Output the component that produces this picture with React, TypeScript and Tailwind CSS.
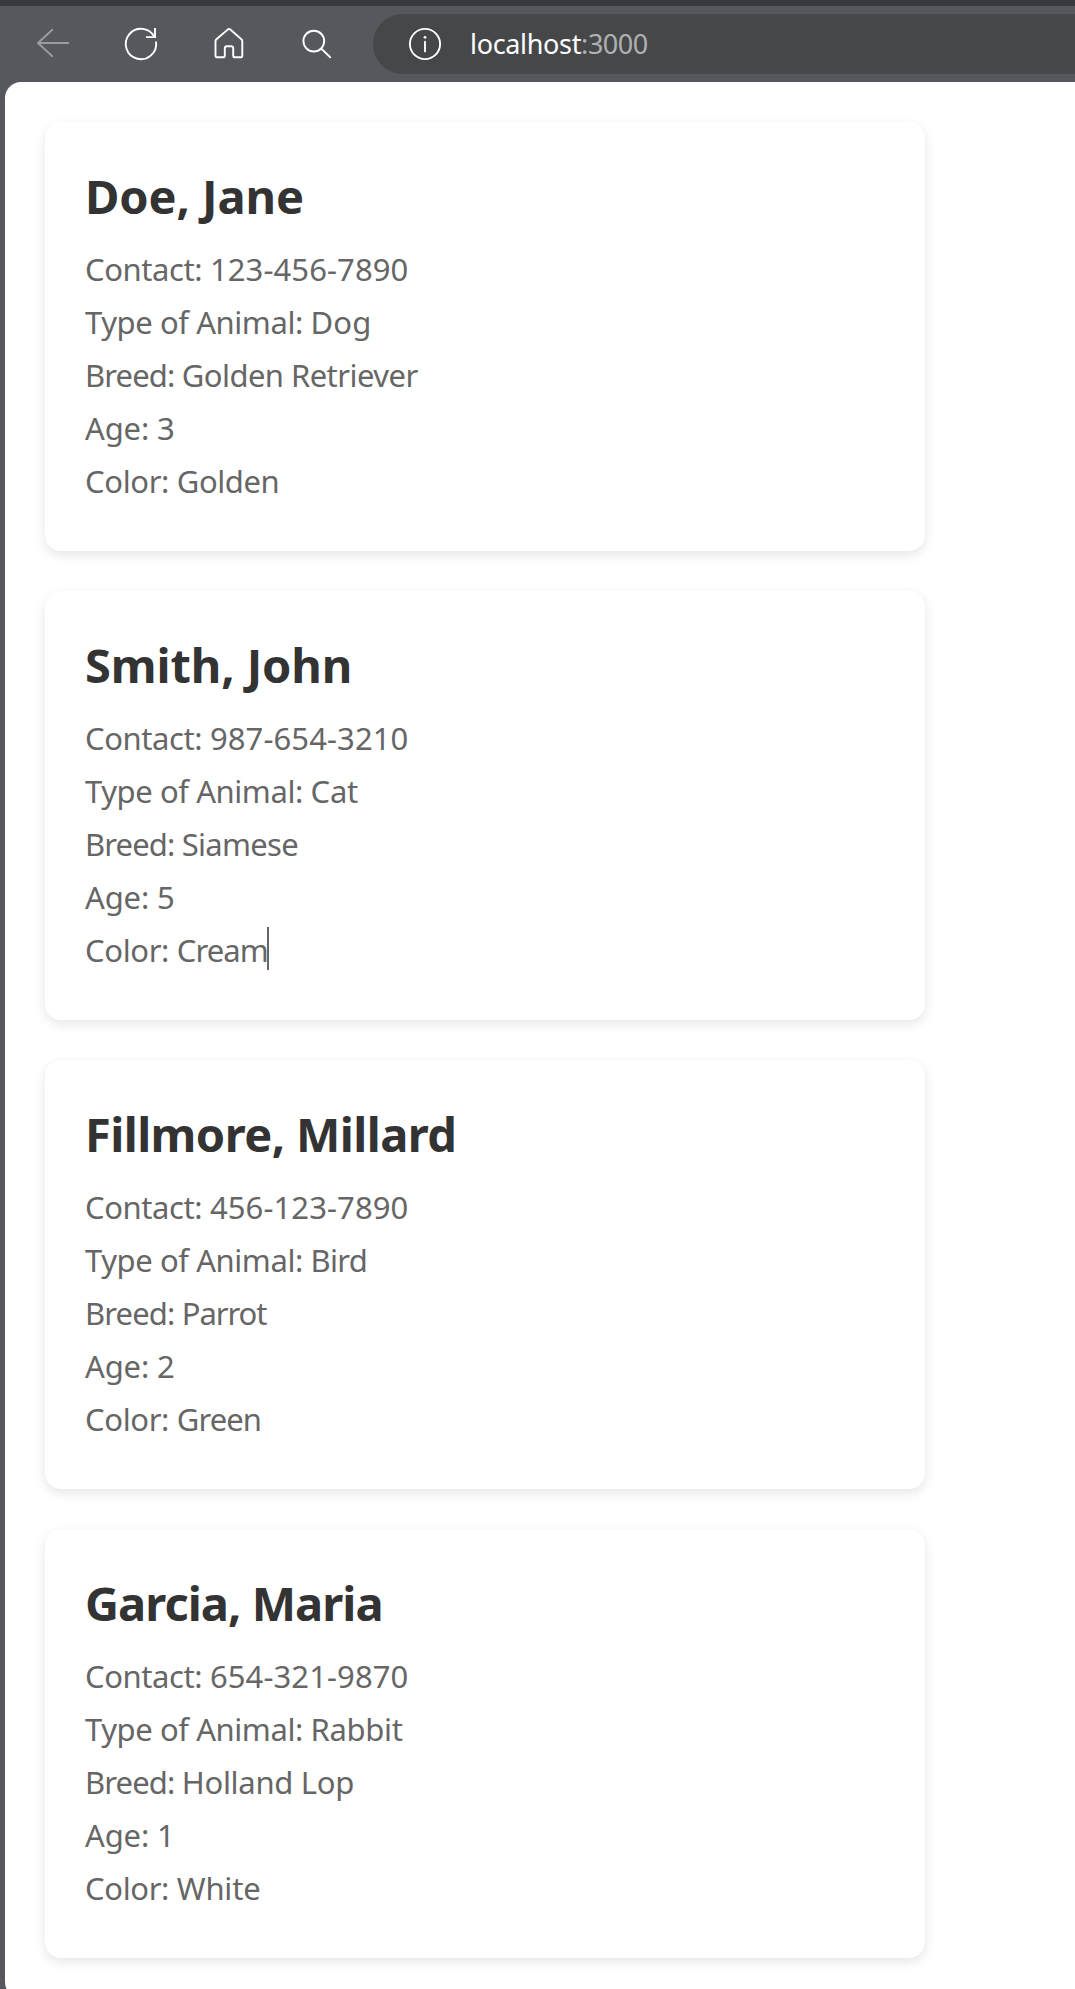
import type { ReactNode } from "react";

type Line = { label: string; labelClass: string; value: string; valueClass: string; caret?: boolean };
type Owner = { name: string; nameClass: string; lines: Line[] };

const contact = (value: string): Line => ({
  label: "Contact: ",
  labelClass: "tracking-[-0.4px]",
  value,
  valueClass: "tracking-[0.1px]",
});
const animal = (value: string, valueClass: string): Line => ({
  label: "Type of Animal: ",
  labelClass: "tracking-[-0.42px]",
  value,
  valueClass,
});
const breed = (value: string, valueClass: string): Line => ({
  label: "Breed: ",
  labelClass: "tracking-[-0.86px]",
  value,
  valueClass,
});
const age = (value: string): Line => ({ label: "Age: ", labelClass: "tracking-[-0.16px]", value, valueClass: "" });
const color = (value: string, valueClass: string, caret = false): Line => ({
  label: "Color: ",
  labelClass: "tracking-[-0.36px]",
  value,
  valueClass,
  caret,
});

const owners: Owner[] = [
  {
    name: "Doe, Jane",
    nameClass: "tracking-[-0.1px]",
    lines: [
      contact("123-456-7890"),
      animal("Dog", "tracking-[0.2px]"),
      breed("Golden Retriever", "tracking-[-0.55px]"),
      age("3"),
      color("Golden", "tracking-[-0.42px]"),
    ],
  },
  {
    name: "Smith, John",
    nameClass: "tracking-[-0.1px]",
    lines: [
      contact("987-654-3210"),
      animal("Cat", "tracking-[-0.2px]"),
      breed("Siamese", "tracking-[-0.7px]"),
      age("5"),
      color("Cream", "tracking-[-0.9px]", true),
    ],
  },
  {
    name: "Fillmore, Millard",
    nameClass: "tracking-[-0.57px]",
    lines: [
      contact("456-123-7890"),
      animal("Bird", "tracking-[-0.7px]"),
      breed("Parrot", "tracking-[-1.06px]"),
      age("2"),
      color("Green", "tracking-[-0.92px]"),
    ],
  },
  {
    name: "Garcia, Maria",
    nameClass: "tracking-[-0.95px]",
    lines: [
      contact("654-321-9870"),
      animal("Rabbit", "tracking-[-0.3px]"),
      breed("Holland Lop", "tracking-[-0.28px]"),
      age("1"),
      color("White", "tracking-[-0.2px]"),
    ],
  },
];

function Icon({ className = "text-white", children }: { className?: string; children: ReactNode }) {
  return (
    <svg
      viewBox="0 0 40 40"
      className={`size-10 shrink-0 ${className}`}
      fill="none"
      stroke="currentColor"
      strokeWidth="1.9"
      strokeLinecap="round"
      strokeLinejoin="round"
    >
      {children}
    </svg>
  );
}

function Toolbar() {
  return (
    <header className="flex h-[76px] items-center bg-[#57585d] pl-[33px]">
      <div className="flex gap-12">
        <Icon className="text-[#9b9ca0]">
          <path d="M35.3 19H4.8M19.3 5.8 5 19l14.3 13.2" />
        </Icon>
        <Icon>
          <path d="M35.1 18.3A15.2 15.2 0 1 1 33.4 12.8" />
          <path d="M34 5V13.1H26" strokeLinecap="square" strokeLinejoin="miter" />
        </Icon>
        <Icon>
          <path d="M18.7 5.6Q20 4.5 21.3 5.6L32.4 15.2Q33.3 16 33.3 17.2V31.4Q33.3 33.3 31.4 33.3H26Q24.2 33.3 24.2 31.4V24.3Q24.2 22.2 22.1 22.2H17.9Q15.8 22.2 15.8 24.3V31.4Q15.8 33.3 14 33.3H8.4Q6.5 33.3 6.5 31.4V17.2Q6.5 16 7.4 15.2Z" />
        </Icon>
        <Icon>
          <circle cx="16.8" cy="17.1" r="10.4" />
          <path d="M24.3 24.6 33.2 33.2" />
        </Icon>
      </div>
      <div className="ml-9 flex h-[60px] flex-1 items-center rounded-l-full bg-[#464749] pl-8">
        <Icon>
          <circle cx="20" cy="20" r="15.1" />
          <path d="M20 17.6V27.4" />
          <circle cx="20" cy="13.3" r="1.4" fill="currentColor" stroke="none" />
        </Icon>
        <div className="ml-[25px] whitespace-pre text-[27px] leading-[38px] text-[#b0b1b3]">
          <span className="tracking-[-0.33px] text-white">localhost</span>
          <span className="tracking-[-0.46px]">:3000</span>
        </div>
      </div>
    </header>
  );
}

function OwnerCard({ owner }: { owner: Owner }) {
  return (
    <section className="h-[429px] w-[880px] rounded-2xl bg-white p-10 shadow-[0_4px_12px_rgba(0,0,0,0.1)]">
      <h2 className={`mb-[13px] text-[47px] leading-[68px] font-bold text-[#333333] ${owner.nameClass}`}>
        {owner.name}
      </h2>
      {owner.lines.map((line) => (
        <p key={line.label} className="flex whitespace-pre text-[31px] leading-[53px] text-[#666666]">
          <span className={line.labelClass}>{line.label}</span>
          <span className={`relative ${line.valueClass}`}>
            {line.value}
            {line.caret && <span className="absolute top-[3px] -right-px h-[43px] w-0.5 bg-[#666666]" />}
          </span>
        </p>
      ))}
    </section>
  );
}

export default function App() {
  return (
    <div className="h-[1989px] w-[1075px] overflow-hidden bg-[#57585d] font-['Noto_Sans','Open_Sans',sans-serif]">
      <div className="h-1.5 bg-[#38393d]" />
      <Toolbar />
      <main className="ml-[5px] flex h-[1916px] flex-col gap-10 rounded-l-2xl bg-white pt-10 pl-10">
        {owners.map((owner) => (
          <OwnerCard key={owner.name} owner={owner} />
        ))}
      </main>
    </div>
  );
}
